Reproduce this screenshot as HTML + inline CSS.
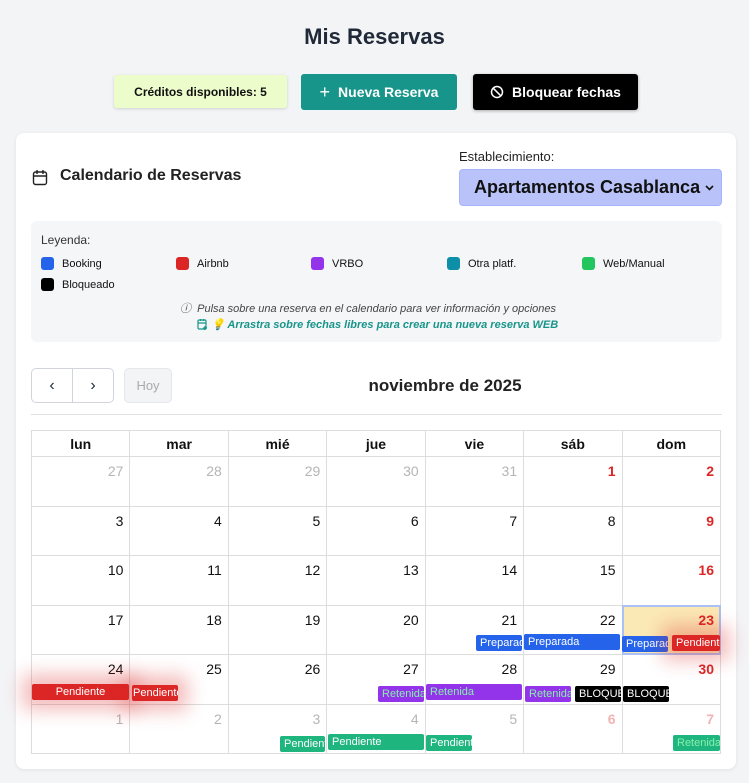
<!DOCTYPE html>
<html><head><meta charset="utf-8"><style>
*{box-sizing:border-box;margin:0;padding:0}
body{width:749px;height:783px;background:#f3f4f6;font-family:"Liberation Sans",sans-serif;color:#1f2937;position:relative;overflow:hidden}
.a{position:absolute}
h1{position:absolute;left:0;right:0;top:24px;text-align:center;font-size:22px;font-weight:bold;color:#1f2937}
.btn{position:absolute;display:flex;align-items:center;justify-content:center;font-weight:bold;border-radius:3px}
.card{position:absolute;left:16px;top:133px;width:720px;height:636px;background:#fff;border-radius:8px;box-shadow:0 1px 4px rgba(0,0,0,.08)}
.leg{position:absolute;left:31px;top:221px;width:691px;height:121px;background:#f5f6f8;border-radius:6px}
.li{position:absolute;font-size:11px;color:#111;display:flex;align-items:center}
.li i{display:inline-block;width:13px;height:13px;border-radius:3px;margin-right:8px}
table{position:absolute;left:31px;top:430px;border-collapse:collapse;table-layout:fixed;width:690px}
th,td{border:1px solid #ddd}
th{height:26px;font-size:14px;font-weight:bold;color:#111}
td{height:49.5px;vertical-align:top;text-align:right;padding:6px 6px 0 0;font-size:14px;color:#111}
td.w{color:#dc2626;font-weight:bold}
td.o{color:#b5b5b5}
td.ow{color:#f2b3b3;font-weight:bold}
.ev{position:absolute;height:16px;font-size:11px;color:#fff;line-height:16px;padding-left:4px;white-space:nowrap;overflow:hidden;border-radius:2px}
.b{background:#2563eb}.r{background:#dc2626;box-shadow:0 0 18px 10px rgba(220,38,38,.3)}.p{background:#9333ea;color:#86efac}.k{background:#000}.g{background:#1fb57f}
</style></head><body>
<h1>Mis Reservas</h1>
<div class="btn" style="left:114px;top:75px;width:173px;height:33px;background:#ecfccb;font-size:12px;color:#111;box-shadow:0 1px 3px rgba(0,0,0,.15)">Créditos disponibles: 5</div>
<div class="btn" style="left:301px;top:74px;width:156px;height:36px;background:#17958a;color:#fff;font-size:14px"><span style="font-weight:normal;font-size:18px;margin-right:8px">+</span>Nueva Reserva</div>
<div class="btn" style="left:473px;top:74px;width:165px;height:36px;background:#000;color:#fff;font-size:14px;box-shadow:0 1px 3px rgba(0,0,0,.3)"><svg width="14" height="14" viewBox="0 0 14 14" style="margin-right:8px"><circle cx="7" cy="7" r="5.5" fill="none" stroke="#fff" stroke-width="1.5"/><path d="M3.2 3.2L10.8 10.8" stroke="#fff" stroke-width="1.5"/></svg>Bloquear fechas</div>
<div class="card"></div>
<svg class="a" style="left:32px;top:169px" width="16" height="17" viewBox="0 0 16 17"><rect x="1.5" y="3" width="13" height="12.5" rx="2" fill="none" stroke="#222" stroke-width="1.4"/><path d="M1.5 7h13M5 1v4M11 1v4" stroke="#222" stroke-width="1.4"/></svg>
<div class="a" style="left:60px;top:167px;font-size:16px;font-weight:bold;color:#222">Calendario de Reservas</div>
<div class="a" style="left:459px;top:149px;font-size:13px;color:#222">Establecimiento:</div>
<div class="a" style="left:459px;top:169px;width:263px;height:37px;background:#b9c3f9;border:1px solid #a5b4fc;border-radius:4px;font-size:18px;font-weight:bold;color:#111;padding:7px 0 0 14px">Apartamentos Casablanca<svg style="position:absolute;right:7px;top:15px" width="9" height="6" viewBox="0 0 9 6"><path d="M1 1l3.5 3.5L8 1" fill="none" stroke="#111" stroke-width="1.6"/></svg></div>
<div class="leg"></div>
<div class="a" style="left:41px;top:233px;font-size:12px;color:#333">Leyenda:</div>
<div class="li" style="left:41px;top:257px"><i style="background:#2563eb"></i>Booking</div>
<div class="li" style="left:176px;top:257px"><i style="background:#dc2626"></i>Airbnb</div>
<div class="li" style="left:311px;top:257px"><i style="background:#9333ea"></i>VRBO</div>
<div class="li" style="left:447px;top:257px"><i style="background:#0e8fa8"></i>Otra platf.</div>
<div class="li" style="left:582px;top:257px"><i style="background:#22c55e"></i>Web/Manual</div>
<div class="li" style="left:41px;top:278px"><i style="background:#000"></i>Bloqueado</div>
<div class="a" style="left:180px;top:300px;font-size:11px;font-style:italic;color:#444">ⓘ&nbsp; Pulsa sobre una reserva en el calendario para ver información y opciones</div>
<div class="a" style="left:197px;top:318px;font-size:11px;font-style:italic;color:#17958a;font-weight:bold"><svg width="11" height="12" viewBox="0 0 11 12" style="vertical-align:-2px"><rect x="1" y="2" width="8" height="9" rx="1" fill="none" stroke="#17958a" stroke-width="1.2"/><path d="M1 5h8M3.5 1v2M6.5 1v2M8 8v4M6 10h4" stroke="#17958a" stroke-width="1.2"/></svg> 💡 Arrastra sobre fechas libres para crear una nueva reserva WEB</div>
<div class="a" style="left:31px;top:368px;width:42px;height:35px;border:1px solid #d1d5db;border-radius:5px 0 0 5px;text-align:center;line-height:33px;font-size:16px">&#8249;</div>
<div class="a" style="left:72px;top:368px;width:42px;height:35px;border:1px solid #d1d5db;border-radius:0 5px 5px 0;text-align:center;line-height:33px;font-size:16px">&#8250;</div>
<div class="a" style="left:124px;top:368px;width:48px;height:35px;border:1px solid #e5e7eb;background:#f3f4f6;border-radius:5px;text-align:center;line-height:33px;font-size:13px;color:#aaa">Hoy</div>
<div class="a" style="left:345px;top:376px;width:200px;text-align:center;font-size:17px;font-weight:bold;color:#222">noviembre de 2025</div>
<div class="a" style="left:31px;top:414px;width:691px;height:1px;background:#e0e0e0"></div>
<table>
<tr><th>lun</th><th>mar</th><th>mié</th><th>jue</th><th>vie</th><th>sáb</th><th>dom</th></tr>
<tr><td class="o">27</td><td class="o">28</td><td class="o">29</td><td class="o">30</td><td class="o">31</td><td class="w">1</td><td class="w">2</td></tr>
<tr><td>3</td><td>4</td><td>5</td><td>6</td><td>7</td><td>8</td><td class="w">9</td></tr>
<tr><td>10</td><td>11</td><td>12</td><td>13</td><td>14</td><td>15</td><td class="w">16</td></tr>
<tr><td>17</td><td>18</td><td>19</td><td>20</td><td>21</td><td>22</td><td class="w" style="background:#fbe9b5;outline:2px solid #a9c1f5;outline-offset:-2px">23</td></tr>
<tr><td>24</td><td>25</td><td>26</td><td>27</td><td>28</td><td>29</td><td class="w">30</td></tr>
<tr><td class="o">1</td><td class="o">2</td><td class="o">3</td><td class="o">4</td><td class="o">5</td><td class="ow">6</td><td class="ow">7</td></tr>
</table>
<div class="ev b" style="left:476px;top:635px;width:46px">Preparada</div>
<div class="ev b" style="left:524px;top:634px;width:96px">Preparada</div>
<div class="ev b" style="left:622px;top:636px;width:46px">Preparada</div>
<div class="ev r" style="left:672px;top:635px;width:48px">Pendiente</div>
<div class="ev r" style="left:32px;top:684px;width:97px;text-align:center;padding:0">Pendiente</div>
<div class="ev r" style="left:132px;top:685px;width:46px;padding-left:1px">Pendiente</div>
<div class="ev p" style="left:378px;top:686px;width:46px">Retenida</div>
<div class="ev p" style="left:426px;top:684px;width:96px">Retenida</div>
<div class="ev p" style="left:525px;top:686px;width:46px">Retenida</div>
<div class="ev k" style="left:575px;top:686px;width:46px">BLOQUEADO</div>
<div class="ev k" style="left:623px;top:686px;width:46px">BLOQUEADO</div>
<div class="ev g" style="left:280px;top:736px;width:45px">Pendiente</div>
<div class="ev g" style="left:328px;top:734px;width:96px">Pendiente</div>
<div class="ev g" style="left:426px;top:735px;width:46px">Pendiente</div>
<div class="ev g" style="left:673px;top:735px;width:47px;color:#86efac">Retenida</div>
</body></html>
